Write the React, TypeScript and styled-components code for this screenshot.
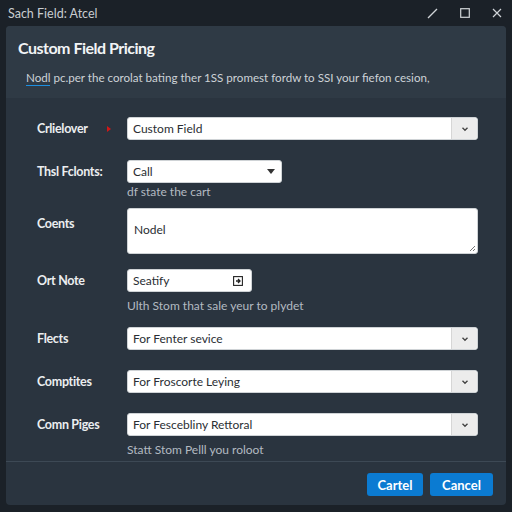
import React from 'react';
import styled, { createGlobalStyle } from 'styled-components';

const Global = createGlobalStyle`
  html, body {
    margin: 0;
    padding: 0;
    background: #1b2128;
    font-family: Lato, "Noto Sans", sans-serif;
  }
`;

const Page = styled.div`
  width: 512px;
  height: 512px;
  background: #1b2128;
  display: flex;
  flex-direction: column;
  overflow: hidden;
`;

const TitleBar = styled.div`
  height: 26px;
  display: flex;
  align-items: center;
  justify-content: space-between;
  padding: 0 10px 0 8px;
  color: #c9cdd1;
  font-size: 12.5px;
`;

const Controls = styled.div`
  display: flex;
  align-items: center;
  gap: 22px;
  color: #d0d4d8;
`;

const Panel = styled.div`
  margin: 0 6px;
  height: 479px;
  background: #2a343f;
  border-radius: 4px;
  display: flex;
  flex-direction: column;
  overflow: hidden;
`;

const Header = styled.div`
  height: 72px;
  background: #2f3a45;
  padding: 12px 0 0 12px;
  box-sizing: border-box;
`;

const Heading = styled.h1`
  margin: 0;
  font-size: 16px;
  font-weight: 700;
  letter-spacing: -0.5px;
  color: #f2f4f6;
  line-height: 20px;
`;

const Desc = styled.p`
  margin: 12px 0 0 8px;
  font-size: 11.6px;
  color: #cdd2d7;
  line-height: 16px;
`;

const Under = styled.span`
  border-bottom: 1.5px solid #1d8fe0;
  padding-bottom: 1px;
`;

const Form = styled.div`
  padding: 19px 28px 0 31px;
  display: flex;
  flex-direction: column;
`;

const Row = styled.div<{ $top: number }>`
  display: flex;
  align-items: flex-start;
  margin-top: ${p => p.$top}px;
`;

const Label = styled.div<{ $pad?: number }>`
  width: 90px;
  flex: none;
  font-size: 12.5px;
  font-weight: 700;
  letter-spacing: -0.3px;
  color: #eceef0;
  line-height: 23px;
  padding-top: ${p => p.$pad ?? 0}px;
  display: flex;
  align-items: center;
`;

const Required = styled.span`
  margin: 0 16px 0 auto;
  width: 0;
  height: 0;
  border-top: 3px solid transparent;
  border-bottom: 3px solid transparent;
  border-left: 4px solid #d01818;
`;

const Field = styled.div`
  flex: 1;
  display: flex;
  flex-direction: column;
`;

const Box = styled.div<{ $w?: number; $h?: number }>`
  width: ${p => (p.$w ? `${p.$w}px` : '100%')};
  height: ${p => p.$h ?? 23}px;
  box-sizing: border-box;
  background: #fff;
  border: 1px solid #cfd3d6;
  border-radius: 3px;
  display: flex;
  align-items: center;
  font-size: 12px;
  color: #2a2e33;
  position: relative;
`;

const Value = styled.span`
  flex: 1;
  padding-left: 5px;
`;

const Arrow = styled.div`
  width: 25px;
  height: 100%;
  background: #ececec;
  border-left: 1px solid #d6d6d6;
  border-radius: 0 3px 3px 0;
  display: flex;
  align-items: center;
  justify-content: center;
`;

const Caret = styled.span`
  width: 0;
  height: 0;
  margin-right: 6px;
  border-left: 4px solid transparent;
  border-right: 4px solid transparent;
  border-top: 5px solid #333;
`;

const AreaText = styled.span`
  align-self: flex-start;
  padding: 13px 0 0 6px;
`;

const Grip = styled.svg`
  position: absolute;
  right: 1px;
  bottom: 1px;
`;

const Help = styled.div<{ $top: number }>`
  margin-top: ${p => p.$top}px;
  font-size: 12px;
  line-height: 14px;
  color: #b3bac1;
`;

const Divider = styled.div`
  margin-top: auto;
  height: 1px;
  background: #3d4955;
`;

const Footer = styled.div`
  display: flex;
  justify-content: flex-end;
  gap: 7px;
  padding: 11px 13px 9px 0;
`;

const Button = styled.button<{ $w: number }>`
  width: ${p => p.$w}px;
  height: 23px;
  border: none;
  border-radius: 3px;
  background: #0b7bd2;
  color: #fff;
  font-family: inherit;
  font-size: 13px;
  font-weight: 700;
  padding: 0;
`;

const Chevron = () => (
  <svg width="8" height="6" viewBox="0 0 8 6">
    <path d="M1.5 1.8 L4 4.2 L6.5 1.8" stroke="#444" strokeWidth="1.4" fill="none" />
  </svg>
);

const Select = ({ value }: { value: string }) => (
  <Box>
    <Value>{value}</Value>
    <Arrow>
      <Chevron />
    </Arrow>
  </Box>
);

export default function App() {
  return (
    <Page>
      <Global />
      <TitleBar>
        <span>Sach Field: Atcel</span>
        <Controls>
          <svg width="11" height="11" viewBox="0 0 11 11">
            <path d="M1 10 L8.5 2.5 Q9.5 1.5 10 1" stroke="#d0d4d8" strokeWidth="1.4" fill="none" />
          </svg>
          <svg width="10" height="10" viewBox="0 0 10 10">
            <rect x="0.7" y="0.7" width="8.6" height="8.6" stroke="#d0d4d8" strokeWidth="1.2" fill="none" />
          </svg>
          <svg width="10" height="10" viewBox="0 0 10 10">
            <path d="M1 1 L9 9 M9 1 L1 9" stroke="#d0d4d8" strokeWidth="1.2" />
          </svg>
        </Controls>
      </TitleBar>
      <Panel>
        <Header>
          <Heading>Custom Field Pricing</Heading>
          <Desc>
            <Under>Nodl</Under> pc.per the corolat bating ther 1SS promest fordw to SSI your fiefon cesion,
          </Desc>
        </Header>
        <Form>
          <Row $top={0}>
            <Label>
              Crlielover
              <Required />
            </Label>
            <Field>
              <Select value="Custom Field" />
            </Field>
          </Row>
          <Row $top={20}>
            <Label>Thsl Fclonts:</Label>
            <Field>
              <Box $w={155}>
                <Value>Call</Value>
                <Caret />
              </Box>
              <Help $top={2}>df state the cart</Help>
            </Field>
          </Row>
          <Row $top={9}>
            <Label $pad={4}>Coents</Label>
            <Field>
              <Box $h={46}>
                <AreaText>Nodel</AreaText>
                <Grip width="8" height="8" viewBox="0 0 8 8">
                  <path d="M7 2 L2 7 M7 5 L5 7" stroke="#777" strokeWidth="1" />
                </Grip>
              </Box>
            </Field>
          </Row>
          <Row $top={15}>
            <Label>Ort Note</Label>
            <Field>
              <Box $w={125}>
                <Value>Seatify</Value>
                <svg width="10" height="10" viewBox="0 0 10 10" style={{ marginRight: 8 }}>
                  <rect x="0.6" y="0.6" width="8.8" height="8.8" stroke="#222" strokeWidth="1.1" fill="none" />
                  <path d="M3 5 L7 5 M5 3 L7 5 L5 7" stroke="#222" strokeWidth="1.3" fill="none" />
                </svg>
              </Box>
              <Help $top={7}>Ulth Stom that sale yeur to plydet</Help>
            </Field>
          </Row>
          <Row $top={14}>
            <Label>Flects</Label>
            <Field>
              <Select value="For Fenter sevice" />
            </Field>
          </Row>
          <Row $top={20}>
            <Label>Comptites</Label>
            <Field>
              <Select value="For Froscorte Leying" />
            </Field>
          </Row>
          <Row $top={20}>
            <Label>Comn Piges</Label>
            <Field>
              <Select value="For Fescebliny Rettoral" />
              <Help $top={7}>Statt Stom Pelll you roloot</Help>
            </Field>
          </Row>
        </Form>
        <Divider />
        <Footer>
          <Button $w={56}>Cartel</Button>
          <Button $w={63}>Cancel</Button>
        </Footer>
      </Panel>
    </Page>
  );
}
